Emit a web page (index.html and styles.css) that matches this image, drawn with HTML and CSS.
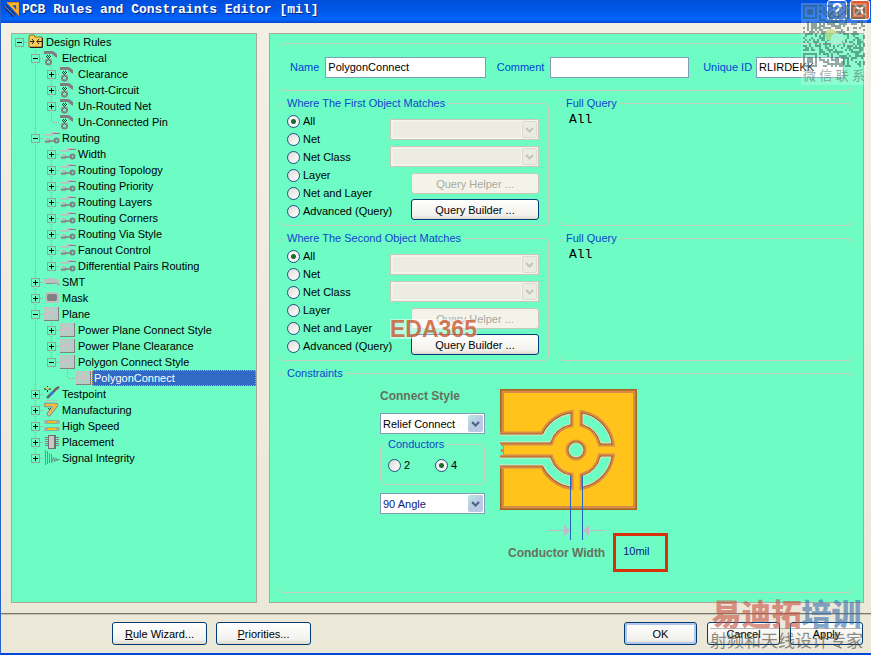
FILE: index.html
```html
<!DOCTYPE html>
<html lang="en">
<head>
    <meta charset="UTF-8">
    <meta name="viewport" content="width=device-width, initial-scale=1.0">
    <title>PCB Rules and Constraints Editor [mil]</title>
    <link rel="stylesheet" href="styles.css">
</head>
<body>

    <!-- Shared icons -->
    <svg class="icon-defs" aria-hidden="true">
        <symbol id="i-electrical" viewBox="0 0 16 16">
            <path d="M0 1h9l4 3v4l-3-2-2-2H0z" fill="#808080"/>
            <path d="M3 5h1v1H3zM5 5h1v1H5zM4 6h1v1H4zM2 6h1v1H2zM3 7h1v1H3zM5 7h1v1H5zM4 8h1v1H4zM6 6h1v1H6z" fill="#124a34"/>
            <circle cx="4.500" cy="12" r="2.500" fill="none" stroke="#808080" stroke-width="2"/>
        </symbol>
        <symbol id="i-routing" viewBox="0 0 16 16">
            <path d="M0 5h6M6 5l2-2h7" stroke="#c0c0c0" stroke-width="1.500" fill="none"/>
            <circle cx="8" cy="4" r="2" fill="#c0c0c0"/>
            <path d="M9 3.500h7" stroke="#808080"/>
            <path d="M1 12l2-2M4 11h8" stroke="#808080" stroke-width="1.500"/>
            <circle cx="4" cy="10" r="2" fill="#b8b8b8"/>
            <path d="M2 12h3l1-2" stroke="#808080" stroke-width="1.500" fill="none"/>
            <circle cx="12.500" cy="10.500" r="2" fill="none" stroke="#808080" stroke-width="2"/>
        </symbol>
        <symbol id="i-smt" viewBox="0 0 16 16">
            <path d="M1 5h2l1-1h5l1 1h3l2 2 1 4h-2l-2-2-1 1H2L0 8V6z" fill="#c0c0c0"/>
            <path d="M2 9.500h8l2-1 3 3" stroke="#909090" fill="none"/>
        </symbol>
        <symbol id="i-mask" viewBox="0 0 16 16">
            <rect x="1" y="2" width="14" height="11" rx="3" fill="#c0c0c0"/>
            <rect x="3" y="4" width="10" height="7" rx="2" fill="#808080"/>
        </symbol>
        <symbol id="i-plane" viewBox="0 0 16 16">
            <path d="M0 1h15v14H0z" fill="#808080"/>
            <path d="M0 1h14v13H0z" fill="#c4c4c4"/>
            <path d="M3 6V5l2-2h1M9 3h1l2 2v1M12 9v1l-2 2H9M6 12H5l-2-2V9" stroke="#8aeac2" stroke-width="1.500" fill="none"/>
            <path d="M7 7h1v1H7z" fill="#6dfcc4"/>
        </symbol>
        <symbol id="i-folder" viewBox="0 0 16 16">
            <path d="M1 3l1-2h4l1 2h7v10H1z" fill="#ffcc58" stroke="#8c6a20"/>
            <path d="M2 13.500h12.500V4" stroke="#222" fill="none"/>
            <path d="M2 7.500h4M4 5l2 2.500L4 10M14 7.500H9M11 5L9 7.500l2 2.500" stroke="#222" fill="none"/>
        </symbol>
        <symbol id="i-testpoint" viewBox="0 0 16 16">
            <path d="M3.500 0v6M0 3h7" stroke="#222"/>
            <path d="M3.500 1v3M2 2.500h3" stroke="#ffd400"/>
            <path d="M3 12L12 3l3-2" stroke="#666" stroke-width="2.500" fill="none"/>
            <path d="M6 9l3-3" stroke="#2878e8" stroke-width="2"/>
            <path d="M1 14.500h13" stroke="#c0c0c0"/>
        </symbol>
        <symbol id="i-manufacturing" viewBox="0 0 16 16">
            <path d="M2 3h10L5 12" stroke="#808080" stroke-width="4.500" stroke-linecap="round" stroke-linejoin="round" fill="none"/>
            <path d="M2 3h10L5 12" stroke="#c8c0a0" stroke-width="3" stroke-linecap="round" stroke-linejoin="round" fill="none"/>
            <path d="M2 3h10L5 12" stroke="#ffb818" stroke-width="1.500" fill="none"/>
            <path d="M4 6h1v1H4zM6 6h1v1H6zM5 7h1v1H5z" fill="#124a34"/>
        </symbol>
        <symbol id="i-speed" viewBox="0 0 16 16">
            <path d="M2 4h12M2 11h12" stroke="#808080" stroke-width="3"/>
            <path d="M3 4h10M3 11h10" stroke="#ffb818" stroke-width="2"/>
            <circle cx="2" cy="4" r="2" fill="#a8a8a8"/>
            <circle cx="14" cy="4" r="2" fill="#a8a8a8"/>
            <circle cx="2" cy="11" r="2" fill="#a8a8a8"/>
            <circle cx="14" cy="11" r="2" fill="#a8a8a8"/>
        </symbol>
        <symbol id="i-placement" viewBox="0 0 16 16">
            <path d="M1 3.500h14M1 5.500h14M1 7.500h14M1 9.500h14M1 11.500h14" stroke="#808080"/>
            <path d="M4 1h8v14H4z" fill="#707070"/>
            <path d="M5 2h5v12H5z" fill="#c8c8c8"/>
        </symbol>
        <symbol id="i-signal" viewBox="0 0 16 16">
            <path d="M1.500 0v15M3.500 1v13M5.500 3v10M7.500 4v9l2-6 1 5 1.500-4 1 3 1-2 2 1" stroke="#659b84" fill="none"/>
        </symbol>
        <symbol id="i-angle" viewBox="0 0 9 6">
            <path d="M1 1l3.500 3.500L8 1" stroke="currentColor" stroke-width="2" fill="none"/>
        </symbol>
    </svg>

    <div class="window">

        <header class="titlebar">
            <svg class="app-icon" viewBox="0 0 16 18" aria-hidden="true">
                <path d="M3 1h13v14z" fill="#ffb52e" stroke="#e08a10"/>
                <path d="M9 4h4v5z" fill="#1050c8"/>
                <path d="M1 5l10 10" stroke="#162a5c" stroke-width="4"/>
                <path d="M1 5l10 10" stroke="#3f80d8" stroke-width="1.500"/>
            </svg>
            <h1>PCB Rules and Constraints Editor [mil]</h1>
            <button type="button" class="title-button" aria-label="Help">?</button>
            <button type="button" class="title-button close" aria-label="Close">
                <svg viewBox="0 0 12 12"><path d="M1 1l10 10M11 1L1 11" stroke="#fff" stroke-width="2"/></svg>
            </button>
        </header>

        <main class="content">

            <!-- Rule tree -->
            <nav class="panel tree" aria-label="Design rules">
                <ul class="root">
                    <li>
                        <div class="row"><button type="button" class="toggle open" aria-label="Collapse"></button><svg class="icon"><use href="#i-folder"/></svg><span class="label">Design Rules</span></div>
                        <ul>
                            <li>
                                <div class="row"><button type="button" class="toggle open" aria-label="Collapse"></button><svg class="icon"><use href="#i-electrical"/></svg><span class="label">Electrical</span></div>
                                <ul>
                                    <li><div class="row"><button type="button" class="toggle" aria-label="Expand"></button><svg class="icon"><use href="#i-electrical"/></svg><span class="label">Clearance</span></div></li>
                                    <li><div class="row"><button type="button" class="toggle" aria-label="Expand"></button><svg class="icon"><use href="#i-electrical"/></svg><span class="label">Short-Circuit</span></div></li>
                                    <li><div class="row"><button type="button" class="toggle" aria-label="Expand"></button><svg class="icon"><use href="#i-electrical"/></svg><span class="label">Un-Routed Net</span></div></li>
                                    <li><div class="row leaf"><svg class="icon"><use href="#i-electrical"/></svg><span class="label">Un-Connected Pin</span></div></li>
                                </ul>
                            </li>
                            <li>
                                <div class="row"><button type="button" class="toggle open" aria-label="Collapse"></button><svg class="icon"><use href="#i-routing"/></svg><span class="label">Routing</span></div>
                                <ul>
                                    <li><div class="row"><button type="button" class="toggle" aria-label="Expand"></button><svg class="icon"><use href="#i-routing"/></svg><span class="label">Width</span></div></li>
                                    <li><div class="row"><button type="button" class="toggle" aria-label="Expand"></button><svg class="icon"><use href="#i-routing"/></svg><span class="label">Routing Topology</span></div></li>
                                    <li><div class="row"><button type="button" class="toggle" aria-label="Expand"></button><svg class="icon"><use href="#i-routing"/></svg><span class="label">Routing Priority</span></div></li>
                                    <li><div class="row"><button type="button" class="toggle" aria-label="Expand"></button><svg class="icon"><use href="#i-routing"/></svg><span class="label">Routing Layers</span></div></li>
                                    <li><div class="row"><button type="button" class="toggle" aria-label="Expand"></button><svg class="icon"><use href="#i-routing"/></svg><span class="label">Routing Corners</span></div></li>
                                    <li><div class="row"><button type="button" class="toggle" aria-label="Expand"></button><svg class="icon"><use href="#i-routing"/></svg><span class="label">Routing Via Style</span></div></li>
                                    <li><div class="row"><button type="button" class="toggle" aria-label="Expand"></button><svg class="icon"><use href="#i-routing"/></svg><span class="label">Fanout Control</span></div></li>
                                    <li><div class="row"><button type="button" class="toggle" aria-label="Expand"></button><svg class="icon"><use href="#i-routing"/></svg><span class="label">Differential Pairs Routing</span></div></li>
                                </ul>
                            </li>
                            <li><div class="row"><button type="button" class="toggle" aria-label="Expand"></button><svg class="icon"><use href="#i-smt"/></svg><span class="label">SMT</span></div></li>
                            <li><div class="row"><button type="button" class="toggle" aria-label="Expand"></button><svg class="icon"><use href="#i-mask"/></svg><span class="label">Mask</span></div></li>
                            <li>
                                <div class="row"><button type="button" class="toggle open" aria-label="Collapse"></button><svg class="icon"><use href="#i-plane"/></svg><span class="label">Plane</span></div>
                                <ul>
                                    <li><div class="row"><button type="button" class="toggle" aria-label="Expand"></button><svg class="icon"><use href="#i-plane"/></svg><span class="label">Power Plane Connect Style</span></div></li>
                                    <li><div class="row"><button type="button" class="toggle" aria-label="Expand"></button><svg class="icon"><use href="#i-plane"/></svg><span class="label">Power Plane Clearance</span></div></li>
                                    <li>
                                        <div class="row"><button type="button" class="toggle open" aria-label="Collapse"></button><svg class="icon"><use href="#i-plane"/></svg><span class="label">Polygon Connect Style</span></div>
                                        <ul>
                                            <li><div class="row leaf"><svg class="icon"><use href="#i-plane"/></svg><span class="label selected">PolygonConnect</span></div></li>
                                        </ul>
                                    </li>
                                </ul>
                            </li>
                            <li><div class="row"><button type="button" class="toggle" aria-label="Expand"></button><svg class="icon"><use href="#i-testpoint"/></svg><span class="label">Testpoint</span></div></li>
                            <li><div class="row"><button type="button" class="toggle" aria-label="Expand"></button><svg class="icon"><use href="#i-manufacturing"/></svg><span class="label">Manufacturing</span></div></li>
                            <li><div class="row"><button type="button" class="toggle" aria-label="Expand"></button><svg class="icon"><use href="#i-speed"/></svg><span class="label">High Speed</span></div></li>
                            <li><div class="row"><button type="button" class="toggle" aria-label="Expand"></button><svg class="icon"><use href="#i-placement"/></svg><span class="label">Placement</span></div></li>
                            <li><div class="row"><button type="button" class="toggle" aria-label="Expand"></button><svg class="icon"><use href="#i-signal"/></svg><span class="label">Signal Integrity</span></div></li>
                        </ul>
                    </li>
                </ul>
            </nav>

            <!-- Rule details -->
            <form class="panel details">

                <div class="box identity">
                    <label for="ruleName">Name</label>
                    <input type="text" id="ruleName" class="text-field name-field" value="PolygonConnect">
                    <label for="comment">Comment</label>
                    <input type="text" id="comment" class="text-field comment-field">
                    <label for="uniqueId">Unique ID</label>
                    <input type="text" id="uniqueId" class="text-field id-field" value="RLIRDEKK">
                </div>

                <div class="match-row">
                    <fieldset class="box match">
                        <legend>Where The First Object Matches</legend>
                        <div class="options">
                            <label><input type="radio" name="first" checked>All</label>
                            <label><input type="radio" name="first">Net</label>
                            <label><input type="radio" name="first">Net Class</label>
                            <label><input type="radio" name="first">Layer</label>
                            <label><input type="radio" name="first">Net and Layer</label>
                            <label><input type="radio" name="first">Advanced (Query)</label>
                        </div>
                        <div class="pickers">
                            <div class="combo disabled"><select aria-label="First net" disabled></select><span class="arrow"><svg><use href="#i-angle"/></svg></span></div>
                            <div class="combo disabled"><select aria-label="First layer" disabled></select><span class="arrow"><svg><use href="#i-angle"/></svg></span></div>
                            <button type="button" class="button" disabled>Query Helper ...</button>
                            <button type="button" class="button">Query Builder ...</button>
                        </div>
                    </fieldset>
                    <fieldset class="box query">
                        <legend>Full Query</legend>
                        <textarea aria-label="First full query" readonly>All</textarea>
                    </fieldset>
                </div>

                <div class="match-row">
                    <fieldset class="box match">
                        <legend>Where The Second Object Matches</legend>
                        <div class="options">
                            <label><input type="radio" name="second" checked>All</label>
                            <label><input type="radio" name="second">Net</label>
                            <label><input type="radio" name="second">Net Class</label>
                            <label><input type="radio" name="second">Layer</label>
                            <label><input type="radio" name="second">Net and Layer</label>
                            <label><input type="radio" name="second">Advanced (Query)</label>
                        </div>
                        <div class="pickers">
                            <div class="combo disabled"><select aria-label="Second net" disabled></select><span class="arrow"><svg><use href="#i-angle"/></svg></span></div>
                            <div class="combo disabled"><select aria-label="Second layer" disabled></select><span class="arrow"><svg><use href="#i-angle"/></svg></span></div>
                            <button type="button" class="button" disabled>Query Helper ...</button>
                            <button type="button" class="button">Query Builder ...</button>
                            <span class="stamp">EDA365</span>
                        </div>
                    </fieldset>
                    <fieldset class="box query">
                        <legend>Full Query</legend>
                        <textarea aria-label="Second full query" readonly>All</textarea>
                    </fieldset>
                </div>

                <fieldset class="box constraints">
                    <legend>Constraints</legend>
                    <div class="constraint-grid">
                        <div class="style-column">
                            <label class="caption" for="connectStyle">Connect Style</label>
                            <div class="combo"><select id="connectStyle"><option>Relief Connect</option></select><span class="arrow"><svg><use href="#i-angle"/></svg></span></div>
                            <fieldset class="box conductors">
                                <legend>Conductors</legend>
                                <label><input type="radio" name="conductors">2</label>
                                <label><input type="radio" name="conductors" checked>4</label>
                            </fieldset>
                            <div class="combo navy"><select aria-label="Angle"><option>90 Angle</option></select><span class="arrow"><svg><use href="#i-angle"/></svg></span></div>
                        </div>

                        <div class="diagram-column">
                            <svg class="diagram" viewBox="0 0 137 144" role="img" aria-label="Relief connection">
                                <defs>
                                    <clipPath id="plate"><path d="M0 0h137v121H0z"/></clipPath>
                                    <g id="slots">
                                        <path d="M-6 46H43A36 36 0 0 1 70 25V35A26 26 0 0 0 50 53H-6z"/>
                                        <path d="M-6 76H43A36 36 0 0 0 70 97V87A26 26 0 0 1 50 69H-6z"/>
                                        <path d="M83 25A36 36 0 0 1 111 54H101A26 26 0 0 0 83 35z"/>
                                        <path d="M83 97A36 36 0 0 0 111 68H101A26 26 0 0 1 83 87z"/>
                                        <circle cx="76" cy="61" r="7"/>
                                    </g>
                                </defs>
                                <g clip-path="url(#plate)">
                                    <path d="M0 0h137v121H0z" fill="#ffc31c"/>
                                    <path d="M0 0h137v121H0z" fill="none" stroke="#d68c48" stroke-width="8"/>
                                    <path d="M0 0h137v121H0z" fill="none" stroke="#a5641e" stroke-width="3"/>
                                    <use href="#slots" fill="none" stroke="#d68c48" stroke-width="7"/>
                                    <use href="#slots" fill="none" stroke="#a5641e" stroke-width="3"/>
                                    <use href="#slots" fill="#6dfcc4" stroke="#e4e4c8" stroke-width="1"/>
                                    <path d="M0 55h1v2h2v3H1v3h2v3H0z" fill="#6dfcc4"/>
                                </g>
                                <path d="M70.500 87v64M82.500 87v64" stroke="#2a62c4"/>
                                <path d="M48 141.500h16M88 141.500h17" stroke="#c4b8cc"/>
                                <path d="M64 136l6 5.500-6 5.500zM89 136l-6 5.500 6 5.500z" fill="#c4b8cc"/>
                            </svg>
                            <div class="width-row">
                                <label class="caption" for="conductorWidth">Conductor Width</label>
                                <input type="text" id="conductorWidth" class="width-field" value="10mil">
                            </div>
                        </div>
                    </div>
                </fieldset>

            </form>
        </main>

        <footer class="footer">
            <button type="button" class="button wide"><u>R</u>ule Wizard...</button>
            <button type="button" class="button wide"><u>P</u>riorities...</button>
            <div class="actions">
                <button type="button" class="button default">OK</button>
                <button type="button" class="button">Cancel</button>
                <button type="button" class="button">Apply</button>
            </div>
        </footer>

        <!-- Overlays -->
        <div class="contact" lang="zh">
            <svg id="qr" class="qr" viewBox="0 0 31 31" shape-rendering="crispEdges" aria-hidden="true"></svg>
            <div class="contact-text"><span>微</span><span>信</span><span>联</span><span>系</span></div>
        </div>
        <div class="brand" lang="zh">
            <div class="brand-name"><span>易迪拓</span><b>培训</b></div>
            <div class="brand-line">射频和天线设计专家</div>
        </div>
    </div>

    <script src="script.js"></script>
</body>
</html>
```
FILE: styles.css
```css
* {
    box-sizing: border-box;
}

body {
    margin: 0;
    font-family: "Liberation Sans", Arial, sans-serif;
    font-size: 11px;
    line-height: 14px;
    color: #000;
}

button,
input,
select,
textarea {
    font: inherit;
    color: inherit;
    margin: 0;
}

ul {
    list-style: none;
    margin: 0;
    padding: 0;
}

.icon-defs {
    display: none;
}

.window {
    position: relative;
    display: flex;
    flex-direction: column;
    min-height: 100vh;
    overflow: hidden;
    background: linear-gradient(#f2efe4, #ebe8d8);
    border-left: 1px solid #2a62c8;
    border-bottom: 2px solid #0046d8;
}

/* Title bar */
.titlebar {
    display: flex;
    align-items: center;
    gap: 3px;
    height: 23px;
    padding: 0 1px 3px 3px;
    background: linear-gradient(#0050dc, #0058ea 50%, #0066ff 85%, #0046d0);
}

.app-icon {
    width: 15px;
    height: 18px;
}

.titlebar h1 {
    flex: 1;
    margin: 0;
    font: bold 13px/18px "Liberation Mono", "Courier New", monospace;
    color: #fff;
    text-shadow: 1px 1px 0 #0a2a80;
}

.title-button {
    display: flex;
    align-items: center;
    justify-content: center;
    width: 20px;
    height: 20px;
    padding: 0;
    border: 1px solid #fff;
    border-radius: 3px;
    background: #2a66dc;
    color: #fff;
    font-size: 18px;
    font-weight: bold;
}

.title-button.close {
    background: #dc5a30;
}

.title-button svg {
    width: 12px;
    height: 12px;
}

/* Main area */
.content {
    flex: 1;
    display: flex;
    gap: 12px;
    padding: 10px 7px 10px 10px;
}

.panel {
    background: #6dfcc4;
    border: 1px solid #aaa899;
}

/* Tree */
.tree {
    flex: 0 0 246px;
}

.tree ul ul {
    padding-left: 16px;
}

.tree li {
    background: repeating-linear-gradient(#8fae9c 0 1px, transparent 1px 2px) 7px 0 / 1px 100% no-repeat;
}

.tree li:last-child {
    background-size: 1px 8px;
}

.tree .root > li {
    background: none;
}

.row {
    display: flex;
    align-items: center;
    height: 16px;
    padding-left: 3px;
    background: repeating-linear-gradient(90deg, #8fae9c 0 1px, transparent 1px 2px) 8px 8px / 8px 1px no-repeat;
}

.row.leaf {
    padding-left: 16px;
}

.toggle {
    width: 9px;
    height: 9px;
    margin-right: 4px;
    padding: 0;
    border: 1px solid #96a494;
    background:
        linear-gradient(#000, #000) center / 5px 1px no-repeat,
        linear-gradient(#000, #000) center / 1px 5px no-repeat,
        #6dfcc4;
}

.toggle.open {
    background:
        linear-gradient(#000, #000) center / 5px 1px no-repeat,
        #6dfcc4;
}

.icon {
    flex: none;
    width: 16px;
    height: 16px;
}

.label {
    padding-left: 2px;
    line-height: 16px;
    white-space: nowrap;
}

.label.selected {
    flex: 1;
    padding-left: 1px;
    line-height: 14px;
    color: #fff;
    background: #316ac5;
    border: 1px dotted #d8a050;
}

/* Details */
.details {
    flex: 1;
    min-width: 0;
    display: flex;
    flex-direction: column;
    gap: 5px;
    padding: 9px;
}

.box {
    min-width: 0;
    margin: 0;
    border: 1px solid #c6cdb8;
    border-radius: 5px;
}

legend {
    padding: 0 2px;
    margin-left: -2px;
    color: #0f45cc;
}

.identity {
    display: flex;
    align-items: center;
    height: 48px;
    padding: 0 9px 0 10px;
    white-space: nowrap;
    color: #0046d5;
}

.text-field {
    height: 21px;
    min-width: 0;
    margin: 0 11px 0 6px;
    padding: 0 2px;
    color: #000;
    background: #fff;
    border: 1px solid #7f9db9;
}

.name-field {
    flex: 164 1 0;
}

.comment-field {
    flex: 141 1 0;
    margin-right: 14px;
}

.id-field {
    flex: 87 1 0;
    margin: 0 0 0 4px;
}

.match-row {
    display: flex;
    gap: 10px;
}

.match {
    flex: 0 0 270px;
    display: flex;
    justify-content: space-between;
    padding: 2px 9px 5px 7px;
}

.options label {
    display: flex;
    align-items: center;
    height: 18px;
    white-space: nowrap;
}

input[type="radio"] {
    appearance: none;
    flex: none;
    width: 13px;
    height: 13px;
    margin-right: 3px;
    border: 1px solid #1c5180;
    border-radius: 50%;
    background: linear-gradient(135deg, #dcdcd4, #fff);
}

input[type="radio"]:checked {
    background: radial-gradient(circle, #1c6a30 0 2px, #f4f4f0 3px);
}

.pickers {
    position: relative;
    display: flex;
    flex-direction: column;
    align-items: flex-end;
    gap: 5px;
    flex: none;
    width: 149px;
    padding-top: 7px;
}

.options {
    flex: 1;
    min-width: 0;
}

.combo {
    display: flex;
    align-items: center;
    width: 100%;
    height: 21px;
    padding: 1px;
    background: #fff;
    border: 1px solid #7f9db9;
}

.combo select {
    appearance: none;
    flex: 1;
    min-width: 0;
    height: 17px;
    padding: 0 1px;
    border: 0;
    background: transparent;
}

.combo.navy {
    color: #0a2080;
}

.arrow {
    display: flex;
    align-items: center;
    justify-content: center;
    width: 15px;
    height: 17px;
    color: #4d6185;
    background: linear-gradient(135deg, #b8ecdc, #bac8e4 50%);
    border-radius: 2px;
}

.arrow svg {
    width: 9px;
    height: 6px;
}

.combo.disabled {
    flex: none;
    margin-bottom: 1px;
    background: #f4f3ea;
    border-color: #c9c7ba;
}

.combo.disabled select {
    height: 15px;
    margin: 0 1px;
    background: #e9e8df;
}

.combo.disabled .arrow {
    color: #c4c3b8;
    background: #ecebe0;
    border: 1px solid #dcdbd0;
}

.button {
    width: 73px;
    height: 23px;
    padding: 0;
    border: 1px solid #003c74;
    border-radius: 3px;
    background: linear-gradient(#fff, #f2f1ec 80%, #dcd8cc);
}

.pickers .button {
    width: 128px;
    height: 21px;
}

.button:disabled {
    color: #aaa99c;
    background: #f4f3ea;
    border-color: #c9c7ba;
}

.button.wide {
    width: 95px;
}

.button.default {
    box-shadow: inset 0 0 0 2px #b4c8ec;
}

.query {
    flex: 1;
    display: flex;
    padding: 2px 7px 5px 6px;
}

.query textarea {
    flex: 1;
    min-width: 0;
    height: 100px;
    padding: 0 3px;
    border: 0;
    outline: 0;
    resize: none;
    background: transparent;
    font: 13px/16px "Liberation Mono", "Courier New", monospace;
}

/* Constraints */
.constraints {
    flex: 1;
    padding: 9px 7px 8px;
}

.constraint-grid {
    display: flex;
    gap: 15px;
    padding-left: 93px;
}

.style-column {
    display: flex;
    flex-direction: column;
    width: 105px;
}

.caption {
    font-size: 12px;
    font-weight: bold;
    color: #66705f;
    white-space: nowrap;
}

.style-column .caption {
    margin-bottom: 10px;
}

.conductors {
    display: flex;
    gap: 20px;
    height: 48px;
    margin: 3px 0 8px;
    padding: 5px 7px;
}

.conductors label {
    display: flex;
    align-items: center;
    width: 27px;
    height: 18px;
}

.diagram {
    display: block;
    width: 137px;
    height: 144px;
    overflow: visible;
}

.width-row {
    display: flex;
    align-items: center;
    gap: 8px;
    padding-left: 8px;
}

.width-field {
    width: 55px;
    height: 39px;
    padding: 0 7px 4px;
    color: #0a2080;
    background: transparent;
    border: 3px solid #d8300c;
}

/* Footer */
.footer {
    display: flex;
    gap: 9px;
    padding: 8px 8px 8px 111px;
    border-top: 1px solid #77766a;
    box-shadow: inset 0 1px 0 #c8c5b4;
}

.actions {
    display: flex;
    gap: 10px;
    margin-left: auto;
}

/* Overlays */
.stamp {
    position: absolute;
    left: 0;
    bottom: 16px;
    font-size: 23px;
    line-height: 20px;
    font-weight: bold;
    color: rgba(200, 84, 44, 0.8);
    background: rgba(255, 255, 255, 0.5);
}

.contact,
.brand {
    position: absolute;
    pointer-events: none;
    font-family: "Noto Sans CJK SC", sans-serif;
}

.contact {
    top: 3px;
    right: 4px;
    width: 66px;
    padding: 2px;
    color: rgba(90, 110, 100, 0.6);
    background: rgba(255, 255, 255, 0.22);
}

.contact-text {
    display: flex;
    justify-content: space-between;
    font-size: 13px;
    line-height: 16px;
}

.qr {
    display: block;
    width: 62px;
    height: 62px;
    opacity: 0.5;
}

.brand {
    right: 8px;
    bottom: 2px;
    text-align: center;
    white-space: nowrap;
}

.brand-name {
    font-size: 30px;
    line-height: 32px;
    font-weight: 900;
    color: rgba(200, 88, 72, 0.65);
    border-bottom: 1px solid rgba(120, 116, 104, 0.5);
}

.brand-name b {
    font-weight: 900;
    color: rgba(64, 116, 176, 0.65);
}

.brand-line {
    font-size: 17px;
    line-height: 22px;
    color: rgba(80, 76, 66, 0.65);
}
```
FILE: script.js
```js
// Fill the contact code with modules and its three finder squares
const qr = document.getElementById('qr');
const size = 31;
let seed = 11;
let path = '';

function inFinder(x, y) {
    return (x < 8 && y < 8) || (x > size - 9 && y < 8) || (x < 8 && y > size - 9);
}

for (let y = 0; y < size; y++) {
    for (let x = 0; x < size; x++) {
        seed = (seed * 1103515 + 12345) % 2147483647;
        if (!inFinder(x, y) && seed > 1073741824) {
            path += `M${x} ${y}h1v1h-1z`;
        }
    }
}

[[0, 0], [size - 7, 0], [0, size - 7]].forEach(([x, y]) => {
    path += `M${x} ${y}h7v7h-7zM${x + 1} ${y + 1}v5h5v-5zM${x + 2} ${y + 2}h3v3h-3z`;
});

qr.innerHTML = `<path d="${path}" fill="#27584c"/><circle cx="14" cy="15" r="3" fill="#a8c850"/><circle cx="17" cy="17" r="3" fill="#b8f0d8"/>`;
```
